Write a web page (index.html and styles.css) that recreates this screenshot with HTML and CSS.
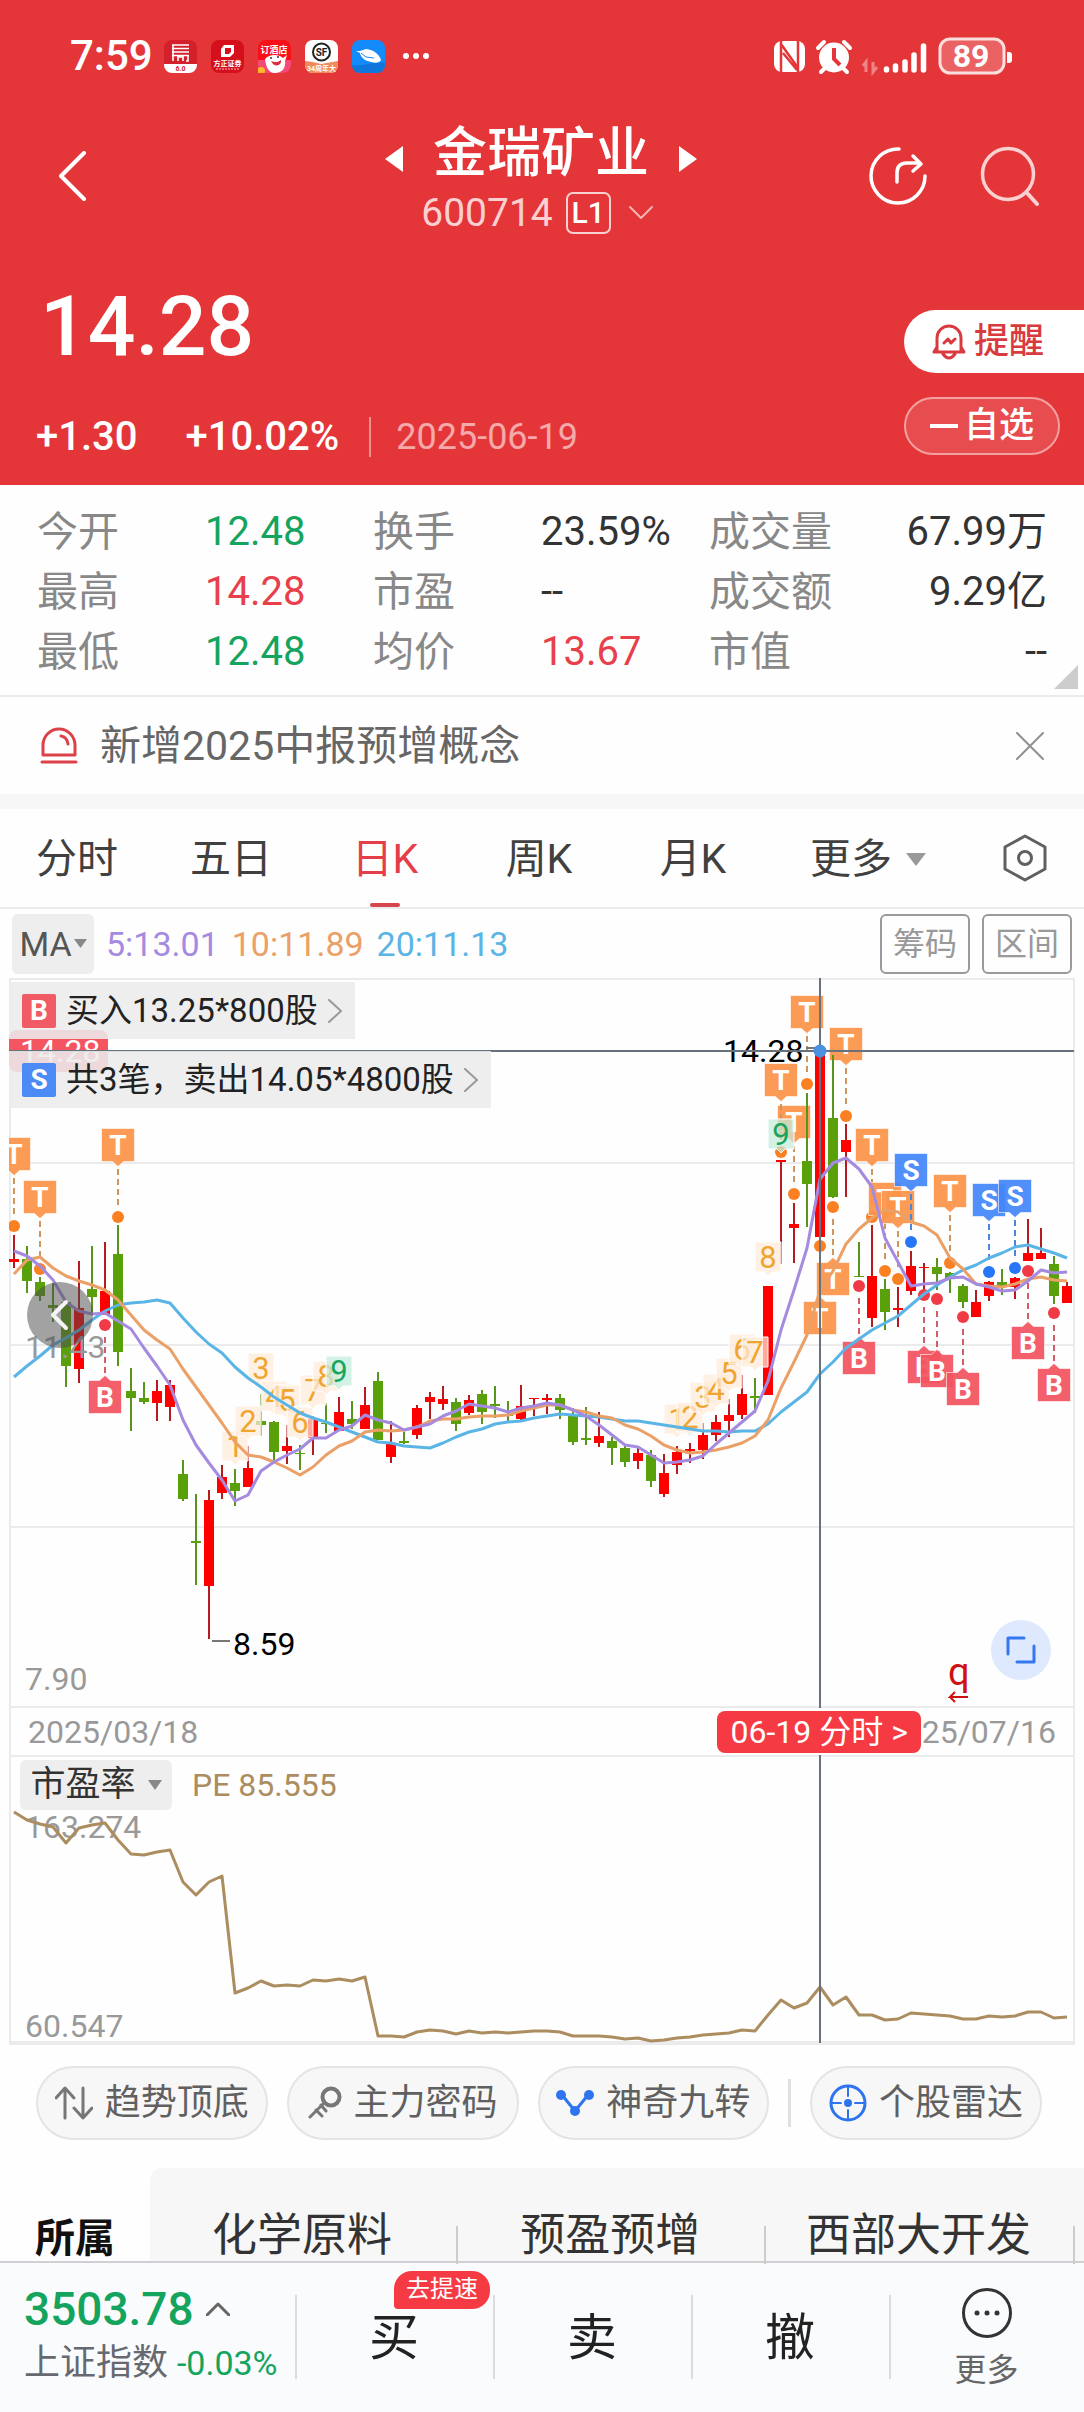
FILE: index.html
```html
<!DOCTYPE html>
<html lang="zh-CN">
<head>
<meta charset="utf-8">
<meta name="viewport" content="width=device-width, initial-scale=1">
<title>金瑞矿业 600714</title>
<link rel="stylesheet" href="styles.css">
</head>
<body>
<header class="hero">
  <div class="status">
    <span class="clock">7:59</span>
    <div class="apps">
      <svg class="app" viewBox="0 0 33 33"><rect width="33" height="33" rx="8" fill="#d3202a"/><path d="M0 24h33v1a8 8 0 0 1-8 8H8a8 8 0 0 1-8-8z" fill="#fff"/><path d="M8 5h17M8 8.500h17M8 12h17M8 15.500h17M9 5v16M14 21v-4h5v4M24 15v6h-2" fill="none" stroke="#fff" stroke-width="1.600"/><text x="16.500" y="31" class="app-text" font-size="7" fill="#d3202a">6.0</text></svg>
      <svg class="app" viewBox="0 0 33 33"><rect width="33" height="33" rx="8" fill="#d60f1d"/><path d="M13 5h10v8l-4 4H10V9zM14 8v6h4l2-2V8z" fill="#fff" fill-rule="evenodd"/><text x="16.500" y="26" class="app-text" font-size="7" fill="#fff">方正证券</text><path d="M5 29h23" stroke="#fff" stroke-width="1" stroke-dasharray="2 1" opacity=".7"/></svg>
      <svg class="app" viewBox="0 0 33 33"><rect width="33" height="33" rx="8" fill="#f80f18"/><path d="M0 20h33v5a8 8 0 0 1-8 8H8a8 8 0 0 1-8-8z" fill="#f44a77"/><circle cx="3" cy="31" r="4" fill="#ffb629"/><path d="M7 19c4-5 14-5 18-1l4-3-2 6c1 7-3 12-10 12S8 26 7 19" fill="#fff"/><path d="M13 21c4 2 8 1 10-1 1 6-7 8-10 1" fill="#d6303c"/><circle cx="13" cy="18" r="1" fill="#333"/><circle cx="20" cy="17" r="1" fill="#333"/><text x="16" y="13" class="app-text" font-size="9" fill="#fff">订酒店</text></svg>
      <svg class="app" viewBox="0 0 33 33"><rect width="33" height="33" rx="8" fill="#fff"/><path d="M0 21l8 1 8 2 17-3v4a8 8 0 0 1-8 8H8a8 8 0 0 1-8-8z" fill="#ef8a5c"/><circle cx="16.500" cy="12" r="8.500" fill="none" stroke="#222" stroke-width="2"/><text x="16.500" y="15.500" class="app-text" font-size="10" fill="#222">SF</text><text x="16.500" y="31" class="app-text" font-size="7" fill="#fff">34周年大</text></svg>
      <svg class="app" viewBox="0 0 33 33"><rect width="33" height="33" rx="8" fill="#138bfb"/><path d="M0 25c10 2 22-4 33-2v2a8 8 0 0 1-8 8H8a8 8 0 0 1-8-8z" fill="#0f76db"/><path d="M4 11h4l6-2c8 1 13 5 15 11-2 5-11 2-16 0-3-2-5-5-5-7zm9 7 8-1 3 4" fill="#fff"/><path d="M9 13l5 4 8 1" stroke="#138bfb" fill="none"/></svg>
      <svg class="dots" viewBox="0 0 28 8" fill="#fff"><circle cx="4" cy="4" r="3"/><circle cx="14" cy="4" r="3"/><circle cx="24" cy="4" r="3"/></svg>
    </div>
    <svg class="system" viewBox="0 0 240 40" fill="#fff">
      <rect x="2" y="5" width="31" height="31" rx="8"/><path d="M9 5v31M9 8l17 24M11 17l14 17M26 5v31" fill="none" stroke="#e43638" stroke-width="2.500"/>
      <circle cx="62" cy="21.500" r="15"/><path d="M46 12l6-6M72 6l6 6M53 32l-4 4M71 32l4 4" stroke="#fff" stroke-width="4" stroke-linecap="round"/><path d="M62 12v11l6 6" stroke="#e43638" stroke-width="4" fill="none"/>
      <path d="M94 36V26l-3 4M101 26v10l4-5" stroke="#ee8485" stroke-width="3" fill="none"/>
      <path d="M114.500 33v1M123.500 30v4M133 26v8M142 19v15M151.500 10v24" stroke="#fff" stroke-width="5.500" stroke-linecap="round"/>
      <rect x="168" y="3" width="64" height="34" rx="10" fill="#ea6263" stroke="#fbdede" stroke-width="3"/><path d="M235 16h2q3 0 3 3v5q0 3-3 3h-2z"/>
      <text x="199" y="31" class="battery">89</text>
    </svg>
  </div>
  <div class="titlebar">
    <button class="icon-btn back" aria-label="返回"><svg width="28" height="50" viewBox="0 0 28 50"><path d="M26 2 3 25l23 23" class="line" stroke="#fff" stroke-width="4"/></svg></button>
    <div class="stock">
      <div class="stock-name">
        <button class="icon-btn" aria-label="上一只"><svg width="18" height="28" viewBox="0 0 18 28"><path d="M18 1v26L0 14z" fill="#fff"/></svg></button>
        <h1>金瑞矿业</h1>
        <button class="icon-btn" aria-label="下一只"><svg width="18" height="28" viewBox="0 0 18 28"><path d="M0 1v26l18-13z" fill="#fff"/></svg></button>
      </div>
      <div class="stock-code"><span>600714</span><b>L1</b><svg width="24" height="14" viewBox="0 0 24 14"><path d="M1 1l11 11L23 1" class="line" stroke="#f6b4b5" stroke-width="2"/></svg></div>
    </div>
    <div class="tools">
      <button class="icon-btn" aria-label="分享"><svg width="60" height="60" viewBox="0 0 60 60"><path d="M31 3A27 27 0 1 0 57 30M29 36V27q0-10 10-10h13M45 10l8 8-8 7" class="line" stroke="#fff" stroke-width="3.500"/></svg></button>
      <button class="icon-btn" aria-label="搜索"><svg width="60" height="60" viewBox="0 0 60 60"><circle cx="28" cy="28" r="25.500" class="line" stroke="#fbd0d1" stroke-width="3.500"/><path d="M48 48l9 10" class="line" stroke="#fbd0d1" stroke-width="4"/></svg></button>
    </div>
  </div>
  <div class="quote">
    <div>
      <div class="price">14.28</div>
      <div class="change"><span>+1.30</span><span>+10.02%</span><time>2025-06-19</time></div>
    </div>
    <div class="actions">
      <button class="remind"><svg width="34" height="36" viewBox="0 0 34 36"><path d="M5 27V14a12 12 0 0 1 24 0v13M2 28h30l-3-5M2 28l3-5M11 30q6 8 12 0M12 19l4-4 3 4 4-4" class="line" stroke="#d93a40" stroke-width="3"/></svg>提醒</button>
      <button class="watch"><svg width="28" height="4" viewBox="0 0 28 4"><path d="M0 2h28" stroke="#fff" stroke-width="4"/></svg>自选</button>
    </div>
  </div>
</header>

<section class="stats">
  <table>
    <tr><th>今开</th><td class="down">12.48</td><th>换手</th><td>23.59%</td><th>成交量</th><td>67.99万</td></tr>
    <tr><th>最高</th><td class="up">14.28</td><th>市盈</th><td>--</td><th>成交额</th><td>9.29亿</td></tr>
    <tr><th>最低</th><td class="down">12.48</td><th>均价</th><td class="up">13.67</td><th>市值</th><td>--</td></tr>
  </table>
</section>

<section class="notice">
  <svg width="38" height="38" viewBox="0 0 38 38"><path d="M3 28V18a16 16 0 0 1 32 0v10zM2 35h34M21 9q6 1 7 8" class="line" stroke="#dd4148" stroke-width="3"/></svg>
  <p>新增2025中报预增概念</p>
  <button class="icon-btn" aria-label="关闭"><svg width="28" height="28" viewBox="0 0 28 28"><path d="M1 1l26 26M27 1 1 27" class="line" stroke="#909090" stroke-width="2"/></svg></button>
</section>

<nav class="periods">
  <button>分时</button><button>五日</button><button class="active">日K</button><button>周K</button><button>月K</button>
  <button class="more">更多<svg width="20" height="13" viewBox="0 0 20 13"><path d="M0 0h20L10 13z" fill="#999"/></svg></button>
  <button class="icon-btn" aria-label="设置"><svg width="44" height="48" viewBox="0 0 44 48"><path d="M22 2 42 13v22L22 46 2 35V13z" class="line" stroke="#606060" stroke-width="3"/><circle cx="22" cy="24" r="6.500" class="line" stroke="#606060" stroke-width="3"/></svg></button>
</nav>

<main>
  <div class="averages">
    <button class="indicator">MA<svg width="13" height="9" viewBox="0 0 13 9"><path d="M0 0h13L6.500 9z" fill="#888"/></svg></button>
    <p><span class="ma5">5:13.01</span><span class="ma10">10:11.89</span><span class="ma20">20:11.13</span></p>
    <button class="outline">筹码</button><button class="outline">区间</button>
  </div>

  <div class="kline">
    <svg id="kline" class="chart" viewBox="0 978 1084 730" role="img" aria-label="日K线图"></svg>
    <div class="trades">
      <button><i class="buy">B</i>买入13.25*800股<svg width="14" height="24" viewBox="0 0 14 24"><path d="M1 1l12 11L1 23" class="line" stroke="#999" stroke-width="2"/></svg></button>
      <button><i class="sell">S</i>共3笔，卖出14.05*4800股<svg width="14" height="24" viewBox="0 0 14 24"><path d="M1 1l12 11L1 23" class="line" stroke="#999" stroke-width="2"/></svg></button>
    </div>
    <button class="icon-btn prev" aria-label="向左"><svg width="66" height="66" viewBox="0 0 66 66"><circle cx="33" cy="33" r="33" fill="#4d4d4d" fill-opacity=".52"/><path d="M39 20 26 33l13 13" class="line" stroke="#f4f4f4" stroke-width="4"/></svg></button>
    <button class="icon-btn expand" aria-label="全屏"><svg width="60" height="60" viewBox="0 0 60 60"><circle cx="30" cy="30" r="30" fill="#dfe9fd"/><path d="M17 34V18h16M43 26v16H26" class="line" stroke="#3577ee" stroke-width="3"/></svg></button>
  </div>

  <div class="dates"><time>2025/03/18</time><time>25/07/16</time><button>06-19 分时 &gt;</button></div>

  <div class="pe">
    <svg id="pe" class="chart" viewBox="0 0 1084 290" role="img" aria-label="市盈率走势"></svg>
    <div class="pe-head"><button class="indicator">市盈率<svg width="14" height="10" viewBox="0 0 14 10"><path d="M0 0h14L7 10z" fill="#888"/></svg></button><span>PE 85.555</span></div>
  </div>
</main>

<div class="signals">
  <button><svg width="38" height="34" viewBox="0 0 38 34"><path d="M10 32V3M1 12l9-10 9 10M28 2v29M19 22l9 10 9-10" class="line" stroke="#777" stroke-width="3"/></svg>趋势顶底</button>
  <button><svg width="34" height="34" viewBox="0 0 34 34"><circle cx="23" cy="11" r="8.500" class="line" stroke="#777" stroke-width="4"/><path d="M16 17 2 31M8 24l6 6M13 19l5 6" class="line" stroke="#777" stroke-width="3"/></svg>主力密码</button>
  <button><svg width="38" height="28" viewBox="0 0 38 28"><path d="M6 6 19 22 32 6" class="line" stroke="#2f74ef" stroke-width="3"/><g fill="#2f74ef"><circle cx="5" cy="6" r="5"/><circle cx="33" cy="6" r="5"/><circle cx="19" cy="22" r="5"/></g></svg>神奇九转</button>
  <hr>
  <button><svg width="38" height="38" viewBox="0 0 38 38"><circle cx="19" cy="19" r="17" class="line" stroke="#2f74ef" stroke-width="3"/><path d="M19 2v10M19 26v10M2 19h10M26 19h10" class="line" stroke="#2f74ef" stroke-width="2"/><circle cx="19" cy="19" r="4" fill="#2f74ef"/></svg>个股雷达</button>
</div>

<section class="concepts">
  <h2>所属</h2>
  <div class="concept-list"><a href="#c1">化学原料</a><a href="#c2">预盈预增</a><a href="#c3">西部大开发</a></div>
</section>

<footer class="trade">
  <div class="index">
    <p class="index-value">3503.78<svg width="24" height="14" viewBox="0 0 24 14"><path d="M1 13 12 2l11 11" class="line" stroke="#666" stroke-width="3"/></svg></p>
    <p class="index-name">上证指数 <span>-0.03%</span></p>
  </div>
  <button>买<em>去提速</em></button>
  <button>卖</button>
  <button>撤</button>
  <button class="menu"><svg width="52" height="52" viewBox="0 0 52 52"><circle cx="26" cy="26" r="23.500" class="line" stroke="#333" stroke-width="3"/><g fill="#333"><circle cx="16" cy="26" r="2.500"/><circle cx="26" cy="26" r="2.500"/><circle cx="36" cy="26" r="2.500"/></g></svg>更多</button>
</footer>
<script src="chart.js"></script>
</body>
</html>
```
FILE: styles.css
```css
* { box-sizing: border-box; }
body {
  margin: 0;
  background: #fefefe;
  color: #333;
  font-family: Roboto, "Noto Sans CJK SC", sans-serif;
  font-size: 32px;
  line-height: 48px;
}
h1, h2, p { margin: 0; }
button {
  padding: 0;
  border: 0;
  background: none;
  color: inherit;
  font: inherit;
  white-space: nowrap;
}
svg { display: block; flex: none; }
.line { fill: none; stroke-linecap: round; stroke-linejoin: round; }
.icon-btn { display: flex; }

/* Header */
.hero { background: #e43638; color: #fff; }
.status {
  display: flex;
  align-items: center;
  height: 112px;
  padding: 0 72px 0 70px;
}
.clock { font-size: 42px; font-weight: 500; }
.apps { display: flex; align-items: center; gap: 14px; margin-left: 11px; }
.app { width: 33px; height: 33px; }
.app-text { text-anchor: middle; font-weight: 700; }
.dots { width: 28px; height: 8px; margin-left: 3px; }
.system { width: 240px; height: 40px; margin-left: auto; }
.battery { font-size: 32px; font-weight: 700; text-anchor: middle; }

.titlebar {
  display: grid;
  grid-template-columns: 1fr auto 1fr;
  align-items: center;
  height: 128px;
  padding: 0 44px 0 58px;
}
.stock-name { display: flex; align-items: center; justify-content: center; gap: 30px; margin-left: -16px; padding-top: 6px; }
.stock-name h1 { font-size: 54px; line-height: 68px; font-weight: 500; }
.stock-name .icon-btn { padding-top: 10px; }
.stock-code { display: flex; align-items: center; justify-content: center; height: 50px; font-size: 39px; color: #fbd0d1; margin-left: -24px; }
.stock-code b { margin: 0 18px 0 13px; width: 45px; border: 2px solid #fbd0d1; border-radius: 7px; font-size: 30px; line-height: 38px; font-weight: 500; text-align: center; color: #fff; }
.tools { display: flex; justify-content: flex-end; gap: 52px; }

.quote { display: flex; justify-content: space-between; height: 245px; padding-left: 36px; }
.price { margin: 39px 0 0 4px; font-size: 84px; line-height: 96px; font-weight: 500; }
.change { display: flex; align-items: center; margin-top: 38px; font-size: 40px; font-weight: 500; }
.change span { margin-right: 48px; }
.change span + span { margin-right: 30px; }
.change time { padding-left: 25px; border-left: 2px solid #ef8f90; font-size: 36px; line-height: 40px; font-weight: 400; color: #f4a9aa; }
.actions { display: flex; flex-direction: column; align-items: flex-start; width: 180px; padding-top: 70px; }
.actions button { display: flex; align-items: center; font-size: 35px; }
.remind { gap: 8px; width: 180px; height: 63px; padding-left: 28px; border-radius: 32px 0 0 32px; background: #fff; color: #d93a40; font-weight: 500; }
.watch { justify-content: center; gap: 6px; width: 156px; height: 58px; margin-top: 24px; border: 2px solid #f3a0a1; border-radius: 29px; background: #e74c4e; font-weight: 500; }

/* Day figures */
.stats { position: relative; padding: 17px 37px 13px; border-bottom: 2px solid #ebebeb; }
.stats::after { content: ""; position: absolute; right: 6px; bottom: 6px; border: 12px solid #ccc; border-top-color: transparent; border-left-color: transparent; }
.stats table { width: 100%; table-layout: fixed; border-collapse: collapse; }
.stats th, .stats td { width: 168px; height: 60px; padding: 0; font-size: 41px; line-height: 60px; font-weight: 400; text-align: left; white-space: nowrap; }
.stats th { color: #888; }
.stats td { font-size: 40px; }
.stats th:nth-child(5) { width: 130px; }
.stats td:last-child { width: auto; text-align: right; }
.stats .up { color: #e8404a; }
.stats .down { color: #14a45e; }

.notice { display: flex; align-items: center; height: 112px; padding: 0 40px; border-bottom: 15px solid #f7f7f7; font-size: 41px; color: #666; }
.notice p { flex: 1; padding-left: 22px; }

/* Period tabs */
.periods { display: grid; grid-template-columns: repeat(5, 154fr) 196fr 118fr; align-items: center; justify-items: center; height: 100px; border-bottom: 2px solid #ebebeb; font-size: 41px; }
.periods button:not(.icon-btn) { position: relative; height: 98px; padding-top: 2px; color: #404040; }
.periods .active:not(.icon-btn) { color: #e63e49; }
.periods .active::after { content: ""; position: absolute; left: calc(50% - 15px); bottom: 0; width: 30px; height: 4px; border-radius: 2px; background: #d5454c; }
.periods .more { display: flex; align-items: center; gap: 14px; }

.averages { display: flex; align-items: center; height: 69px; padding: 0 12px; font-size: 34px; }
.indicator { display: flex; align-items: center; justify-content: center; border-radius: 6px; background: #eee; color: #555; }
.averages .indicator { width: 82px; height: 60px; gap: 2px; }
.averages p { display: flex; flex: 1; gap: 13px; padding-left: 12px; }
.ma5 { color: #a58be0; }
.ma10 { color: #eaa066; }
.ma20 { color: #5bb4e6; }
.outline { width: 90px; height: 60px; margin-left: 12px; border: 2px solid #999; border-radius: 6px; font-size: 32px; color: #999; }

/* Charts */
.chart { width: 100%; height: auto; }
.kline, .pe, .dates { position: relative; }
.axis { font-size: 32px; fill: #999; }
.level { font-size: 32px; fill: #000; }
.tag { font-size: 28px; font-weight: 700; fill: #fff; text-anchor: middle; }
.count { font-size: 31px; text-anchor: middle; }
.trades { position: absolute; top: 4px; left: 9px; display: flex; flex-direction: column; align-items: flex-start; gap: 12px; }
.trades button { display: flex; align-items: center; height: 57px; padding: 0 13px; background: rgba(236, 236, 236, .88); font-size: 33px; color: #222; }
.trades i { width: 34px; height: 34px; margin-right: 10px; border-radius: 2px; font-size: 28px; line-height: 34px; font-style: normal; font-weight: 700; text-align: center; color: #fff; }
.trades svg { margin-left: 10px; }
.buy { background: #f05b66; }
.sell { background: #4c8bf5; }
.prev { position: absolute; left: 27px; top: 304px; }
.expand { position: absolute; right: 33px; bottom: 28px; }
.dates { display: flex; align-items: center; justify-content: space-between; height: 47px; margin: 0 9px; padding: 0 17px; border: solid #ebebeb; border-width: 0 2px; color: #999; }
.dates button { position: absolute; left: 66.5%; top: 3px; width: 204px; height: 42px; border-radius: 8px; background: #f53a44; line-height: 42px; color: #fff; }
.pe-head { position: absolute; left: 20px; top: 5px; display: flex; align-items: center; gap: 20px; color: #ab8d5f; }
.pe .indicator { height: 50px; width: 152px; gap: 12px; font-size: 35px; color: #333; }

/* Signal shortcuts */
.signals { display: flex; align-items: center; justify-content: space-between; gap: 19px; padding: 21px 42px 28px 36px; }
.signals button { display: flex; flex: 1; align-items: center; justify-content: center; gap: 12px; height: 74px; border: 2px solid #e4e4e4; border-radius: 37px; background: #f7f7f7; font-size: 36px; color: #606060; }
.signals hr { width: 3px; height: 48px; margin: 0; border: 0; background: #e0e0e0; }

.concepts { display: flex; height: 93px; line-height: 56px; }
.concepts h2 { width: 150px; padding: 43px 0 0 35px; font-size: 40px; line-height: 56px; color: #111; }
.concept-list { display: grid; grid-template-columns: repeat(3, 33%) 1fr; flex: 1; padding-top: 40px; border-radius: 12px 0 0 0; background: #f7f7f7; }
.concept-list a { position: relative; padding-right: 4px; font-size: 45px; text-align: center; text-decoration: none; color: #333; }
.concept-list a::after { content: ""; position: absolute; right: 0; top: 18px; bottom: 0; width: 2px; background: #ccc; }

/* Trade bar */
.trade { display: grid; grid-template-columns: 295fr 198fr 198fr 198fr 195fr; height: 151px; border-top: 2px solid #d0d0d4; background: #fafbfd; }
.index { padding: 20px 0 0 24px; white-space: nowrap; }
.index-value { display: flex; align-items: center; gap: 12px; font-size: 46px; line-height: 52px; font-weight: 500; color: #14a45e; }
.index-name { font-size: 36px; line-height: 56px; color: #666a70; }
.index-name span { font-size: 34px; color: #14a45e; }
.trade button { position: relative; font-size: 50px; color: #222; }
.trade button::before { content: ""; position: absolute; left: 0; top: 32px; height: 84px; border-left: 2px solid #dcdce0; }
.trade em { position: absolute; left: 50%; top: 8px; width: 96px; height: 38px; border-radius: 18px 18px 18px 4px; background: #f53a44; font-size: 24px; line-height: 37px; font-style: normal; color: #fff; }
.trade .menu { display: flex; flex-direction: column; align-items: center; padding-top: 24px; font-size: 32px; line-height: 62px; color: #666; }
```
FILE: chart.js
```js
const RED = "#fe0000", GREEN = "#5aa00a";
const x = i => 14 + 13 * i;

// colour, wick top, wick bottom, body top, body bottom
const candles = [
  "r 1235 1268 1259 1262","g 1246 1293 1259 1281","g 1277 1301 1282 1296","g 1283 1322 1305 1308","g 1302 1387 1302 1366",
  "r 1261 1383 1308 1369","g 1246 1313 1289 1297","r 1242 1315 1291 1315","g 1225 1366 1254 1352","g 1368 1431 1391 1398",
  "g 1382 1404 1398 1402","r 1380 1421 1391 1403","r 1380 1421 1385 1407","g 1460 1501 1474 1499","g 1494 1585 1541 1543",
  "r 1490 1639 1500 1586","r 1465 1499 1477 1493","g 1469 1506 1483 1491","r 1446 1487 1468 1487","g 1394 1436 1421 1425",
  "g 1421 1460 1422 1452","r 1425 1464 1446 1451","g 1445 1470 1453 1454","r 1416 1455 1419 1438","g 1403 1433 1423 1424",
  "r 1397 1431 1412 1431","g 1401 1429 1419 1424","r 1387 1429 1405 1429","g 1372 1440 1381 1440","r 1421 1463 1443 1457",
  "g 1432 1444 1441 1443","r 1405 1439 1408 1435","r 1392 1419 1397 1402","r 1386 1410 1399 1404","g 1398 1431 1402 1424",
  "r 1395 1415 1400 1413","g 1390 1424 1394 1412","g 1386 1418 1404 1406","g 1401 1421 1415 1416","r 1385 1422 1406 1419",
  "r 1398 1416 1398 1399","r 1394 1414 1398 1400","g 1394 1419 1398 1410","g 1408 1445 1415 1442","g 1407 1445 1438 1440",
  "r 1412 1447 1436 1443","g 1437 1465 1441 1448","g 1445 1467 1448 1462","r 1448 1469 1453 1461","g 1450 1487 1455 1481",
  "r 1454 1497 1473 1494","r 1446 1474 1452 1465","r 1443 1463 1449 1451","r 1423 1459 1435 1450","r 1415 1441 1422 1435",
  "r 1399 1437 1415 1421","r 1375 1419 1394 1415","g 1378 1413 1396 1398","r 1286 1395 1286 1395","r 1161 1264 1160 1162",
  "r 1203 1263 1224 1228","g 1093 1227 1161 1184","r 1050 1237 1050 1237","g 1055 1198 1118 1197","r 1124 1197 1140 1152",
  "g 1242 1277 1276 1277","r 1225 1327 1276 1318","g 1279 1330 1289 1312","r 1287 1327 1308 1310","r 1251 1295 1266 1291",
  "r 1263 1290 1267 1268","g 1258 1290 1267 1274","g 1272 1293 1273 1279","g 1284 1308 1286 1302","r 1290 1317 1302 1317",
  "r 1281 1301 1282 1296","g 1269 1295 1282 1286","r 1277 1299 1278 1287","r 1219 1261 1253 1261","r 1228 1259 1253 1259",
  "g 1256 1304 1264 1296","r 1282 1303 1286 1303"
];
const ma5 = [1251,1256,1266,1280,1302,1311,1314,1313,1321,1329,1348,1366,1385,1420,1445,1463,1480,1501,1495,1471,1462,1455,1449,1438,1438,1430,1426,1415,1420,1423,1430,1427,1424,1416,1411,1404,1406,1408,1412,1408,1406,1403,1405,1410,1416,1425,1435,1445,1447,1455,1463,1462,1460,1456,1444,1433,1422,1411,1381,1330,1290,1248,1179,1163,1158,1169,1187,1238,1262,1286,1284,1283,1278,1277,1284,1287,1291,1290,1281,1270,1273,1272];
const ma10 = [1274,1260,1257,1268,1276,1281,1285,1290,1300,1315,1330,1340,1349,1369,1387,1405,1423,1442,1455,1457,1462,1468,1475,1467,1455,1446,1441,1432,1430,1431,1430,1427,1421,1419,1419,1417,1416,1416,1415,1411,1408,1405,1405,1410,1412,1416,1418,1425,1429,1436,1445,1450,1453,1452,1450,1447,1443,1436,1420,1388,1362,1335,1290,1271,1244,1229,1218,1210,1212,1222,1226,1235,1258,1269,1284,1286,1287,1284,1279,1277,1280,1281];
const ma20 = [1377,1366,1356,1345,1338,1330,1320,1311,1305,1303,1302,1300,1303,1318,1332,1344,1353,1367,1378,1387,1397,1405,1413,1418,1422,1427,1432,1437,1442,1443,1446,1447,1448,1443,1437,1432,1429,1424,1422,1421,1418,1416,1414,1415,1416,1417,1419,1421,1421,1423,1425,1427,1429,1431,1431,1432,1431,1431,1424,1412,1402,1392,1374,1362,1348,1339,1330,1323,1316,1305,1294,1285,1277,1270,1265,1258,1253,1247,1245,1249,1253,1258];
const ratio = [517,540,552,562,610,563,555,548,600,642,645,636,630,725,765,725,708,1058,1043,1023,1037,1034,1037,1019,1022,1017,1022,1011,1187,1187,1190,1175,1169,1172,1181,1172,1178,1175,1178,1175,1172,1172,1175,1187,1187,1187,1190,1196,1193,1202,1199,1193,1190,1184,1181,1178,1169,1172,1125,1080,1103,1090,1040,1095,1071,1125,1125,1140,1137,1118,1121,1124,1127,1136,1136,1128,1130,1127,1115,1115,1133,1131];

// letter, day, label centre, dot centre
const marks = [
  ["T",0,1154,1226],["T",2,1197,1269],["T",8,1145,1217],["B",7,1397,1325],
  ["T",61,1012,1084],["T",64,1044,1116],["T",60,1122,1194],["T",59,1080,1152],
  ["T",66,1145,1217],["T",67,1199,1271],["T",68,1207,1279],["S",69,1170,1242],["T",72,1191,1263],
  ["S",75,1200,1272],["S",77,1196,1268],["T",63,1279,1207],["T",62,1318,1246],
  ["B",65,1358,1286],["B",70,1367,1295],["B",71,1371,1299],["B",73,1389,1317],["B",78,1343,1271],["B",80,1385,1313]
];
const counts = [[1,17,1447],[2,18,1422],[3,19,1369],[4,20,1397],[5,21,1401],[6,22,1423],[7,23,1391],[8,24,1377],[9,25,1372],
  [1,51,1420],[2,52,1418],[3,53,1398],[4,54,1390],[5,55,1374],[6,56,1350],[7,57,1353],[8,58,1258],[9,59,1135]];
const tint = { T: ["#fc9348", "#fb8022", "#cf955f"], B: ["#f25460", "#f03a46", "#d35c66"], S: ["#4487fb", "#2676f7", "#4a86dc"] };

const line = (ys, color) =>
  `<polyline points="${ys.map((y, i) => x(i) + "," + y).join(" ")}" fill="none" stroke="${color}" stroke-width="3" stroke-linejoin="round"/>`;

const candle = (row, i) => {
  const [c, hi, lo, top, bottom] = row.split(" ");
  const fill = c === "r" ? RED : GREEN;
  return `<path d="M${x(i)} ${hi}V${lo}" stroke="${c === "r" ? "#b51c20" : "#57951c"}" stroke-width="2"/><rect x="${x(i) - 5}" y="${top}" width="10" height="${bottom - top}" fill="${fill}"/>`;
};

const mark = ([letter, i, y, dot]) => {
  const [box, spot, dash] = tint[letter];
  const s = dot > y ? 1 : -1;
  return `<path d="M${x(i)} ${y + 24 * s}V${dot - 9 * s}" stroke="${dash}" stroke-width="2" stroke-dasharray="6 4"/>
    <circle cx="${x(i)}" cy="${dot}" r="6" fill="${spot}"/>
    <g fill="${box}" fill-opacity=".93" stroke="#fff" stroke-opacity=".6"><path d="M${x(i) - 16.5} ${y - 16.5 * s}h33v${33 * s}h-11l-5.500 ${5 * s}l-5.500 ${-5 * s}h-11z"/></g>
    <text class="tag" x="${x(i)}" y="${y + 10}">${letter}</text>`;
};

const count = ([n, i, y]) => {
  const nine = n === 9;
  return `<path d="M${x(i) - 13} ${y - 16}h26v30h-9l-4 4l-4-4h-9z" fill="${nine ? "#c3ecdc" : "#fdebd9"}" fill-opacity=".72" stroke="#fff"/>
    <text class="count" x="${x(i)}" y="${y + 10}" fill="${nine ? "#16a45e" : "#f0a531"}">${n}</text>`;
};

document.getElementById("kline").innerHTML = `
  <clipPath id="plot"><path d="M9 978h1066v730H9z"/></clipPath>
  <path d="M10 1708V979H1074V1708M10 1163H1074M10 1345H1074M10 1527H1074M10 1707H1074" fill="none" stroke="#ebebeb" stroke-width="2"/>
  <rect x="9" y="1030" width="99" height="42" rx="8" fill="#f45560"/><text x="20" y="1062" font-size="32" fill="#fff">14.28</text>
  <g clip-path="url(#plot)">
    ${marks.slice(4, 11).map(mark).join("")}
    ${candles.map(candle).join("")}
    ${counts.map(count).join("")}
    ${marks.filter((m, k) => k < 4 || k > 10).map(mark).join("")}
    ${line(ma20, "#5bb4e6")}${line(ma10, "#eaa066")}${line(ma5, "#a58be0")}
  </g>
  <text class="axis" x="25" y="1358">11.43</text><text class="axis" x="25" y="1690">7.90</text>
  <path d="M212 1641h18M806 1048h13" stroke="#777" stroke-width="2"/>
  <text class="level" x="233" y="1655">8.59</text><text class="level" x="723" y="1062">14.28</text>
  <path d="M9 1051H1074M820 978V1708" stroke="#68727c" stroke-width="2"/><circle cx="820" cy="1051" r="6.500" fill="#4b8fdf"/>
  <text x="948" y="1685" font-size="38" fill="#cf1111">q</text><path d="M968 1697H950l5-5M950 1697l5 5" fill="none" stroke="#cf1111" stroke-width="2"/>`;

document.getElementById("pe").innerHTML = `
  <path d="M10 290V1H1074V290" fill="none" stroke="#ebebeb" stroke-width="2"/><path d="M9 288H1075" stroke="#ebebeb" stroke-width="4"/>
  <text class="axis" x="25" y="83">163.274</text><text class="axis" x="25" y="282">60.547</text>
  ${line(ratio.map(v => Math.round(v / 3 - 115)), "#ab8d5f")}
  <path d="M820 0V288" stroke="#68727c" stroke-width="2"/>`;
```
